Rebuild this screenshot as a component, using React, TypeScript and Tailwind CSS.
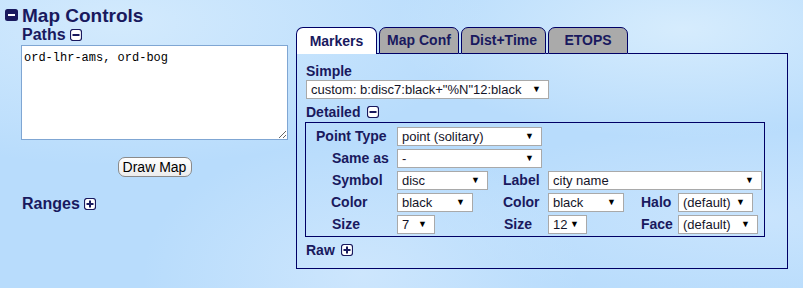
import type { ReactNode } from "react"

const NAVY = "#19195e"

function BoxIcon({ plus, filled }: { plus?: boolean; filled?: boolean }) {
  return (
    <svg width={filled ? 13 : 12} height="12" viewBox={filled ? "0 0 13 12" : "0 0 12 12"} className="shrink-0">
      {filled ? (
        <>
          <rect x="0" y="0" width="13" height="12" rx="2.5" fill={NAVY} />
          <rect x="3" y="5" width="7" height="2" fill="#ffffff" />
        </>
      ) : (
        <>
          <rect x="0.5" y="0.5" width="11" height="11" rx="2.5" fill="#ffffff" stroke={NAVY} strokeWidth="1.2" />
          <rect x="2.5" y="5" width="7" height="2" fill={NAVY} />
          {plus && <rect x="5" y="2.5" width="2" height="7" fill={NAVY} />}
        </>
      )}
    </svg>
  )
}

function Select({ value, w }: { value: string; w: number }) {
  return (
    <div
      className="h-[19px] flex items-center justify-between bg-white border border-[#a9a9a9] pl-[4px] pr-[7px] text-[13px] leading-none text-[#141428] font-normal shrink-0"
      style={{ width: w }}
    >
      <span className="whitespace-nowrap">{value}</span>
      <span className="text-[9px] text-black">▼</span>
    </div>
  )
}

function Row({ children }: { children: ReactNode }) {
  return <div className="h-[22px] flex items-center">{children}</div>
}

function Label({ text, w, pl = 0 }: { text: string; w: number; pl?: number }) {
  return (
    <div className="shrink-0 font-bold text-[14px] leading-none whitespace-nowrap" style={{ width: w, paddingLeft: pl }}>
      {text}
    </div>
  )
}

function Tab({ label, w, active }: { label: string; w: number; active?: boolean }) {
  return (
    <div
      className={`h-[27px] flex items-center justify-center rounded-t-[7px] border-x border-t border-[#000066] font-bold text-[14px] ${
        active ? "bg-white" : "bg-[#aaaaaa] border-b"
      }`}
      style={{ width: w }}
    >
      {label}
    </div>
  )
}

export default function App() {
  return (
    <div
      className="w-[803px] h-[288px] overflow-hidden flex bg-[#b8dcfc] bg-[radial-gradient(ellipse_at_15%_8%,#d3eafd_0%,transparent_38%),radial-gradient(ellipse_at_85%_10%,#d6ecfd_0%,transparent_30%),radial-gradient(ellipse_at_45%_95%,#cde6fd_0%,transparent_35%),radial-gradient(ellipse_at_95%_75%,#c9e4fd_0%,transparent_30%)] font-['Liberation_Sans',Arial,sans-serif]"
      style={{ color: NAVY }}
    >
      {/* left column */}
      <div className="w-[296px] shrink-0 pt-[4px]">
        <div className="flex items-center gap-[4px] pl-[5px] h-[22px]">
          <BoxIcon filled />
          <span className="font-bold text-[19px] leading-none">Map Controls</span>
        </div>
        <div className="flex items-center gap-[4px] pl-[22px] h-[18px]">
          <span className="font-bold text-[16px] leading-none">Paths</span>
          <BoxIcon />
        </div>
        <textarea
          spellCheck={false}
          defaultValue="ord-lhr-ams, ord-bog"
          className="block ml-[21px] mt-[1px] w-[267px] h-[95px] bg-white border border-[#7fa6d3] px-[2px] py-[4px] text-[12px] leading-[16px] text-black font-['Liberation_Mono','DejaVu_Sans_Mono',monospace] outline-none resize"
        />
        <div className="ml-[21px] w-[267px] flex justify-center mt-[17px]">
          <button className="h-[20px] w-[74px] rounded-[7px] border border-[#8a8a8a] bg-[linear-gradient(#ffffff,#ececec)] text-[14px] leading-none text-black">
            Draw Map
          </button>
        </div>
        <div className="flex items-center gap-[4px] pl-[22px] mt-[18px] h-[18px]">
          <span className="font-bold text-[16px] leading-none">Ranges</span>
          <BoxIcon plus />
        </div>
      </div>

      {/* right panel */}
      <div className="pt-[27px] w-[492px] shrink-0">
        <div className="flex items-end">
          <Tab label="Markers" w={81} active />
          <div className="w-[2px] border-b border-[#000066]" />
          <Tab label="Map Conf" w={80} />
          <div className="w-[2px] border-b border-[#000066]" />
          <Tab label="Dist+Time" w={85} />
          <div className="w-[2px] border-b border-[#000066]" />
          <Tab label="ETOPS" w={80} />
          <div className="flex-1 border-b border-[#000066]" />
        </div>
        <div className="h-[215px] border-x border-b border-[#000066] pl-[9px] pt-[9px]">
          <div className="font-bold text-[14px] leading-[16px]">Simple</div>
          <div className="mt-[1px]">
            <Select value={'custom: b:disc7:black+"%N"12:black'} w={243} />
          </div>
          <div className="flex items-center gap-[7px] mt-[5px] h-[16px]">
            <span className="font-bold text-[14px] leading-none">Detailed</span>
            <BoxIcon />
          </div>
          <div className="mt-[2px] -ml-px w-[460px] border border-[#000066] pt-[2px] pb-[1px]">
            <Row>
              <Label text="Point Type" w={91} pl={10} />
              <Select value="point (solitary)" w={145} />
            </Row>
            <Row>
              <Label text="Same as" w={91} pl={26} />
              <Select value="-" w={145} />
            </Row>
            <Row>
              <Label text="Symbol" w={91} pl={26} />
              <div className="w-[106px] shrink-0">
                <Select value="disc" w={91} />
              </div>
              <Label text="Label" w={45} />
              <Select value="city name" w={214} />
            </Row>
            <Row>
              <Label text="Color" w={91} pl={25} />
              <div className="w-[106px] shrink-0">
                <Select value="black" w={76} />
              </div>
              <Label text="Color" w={45} />
              <div className="w-[93px] shrink-0">
                <Select value="black" w={76} />
              </div>
              <Label text="Halo" w={37} />
              <Select value="(default)" w={75} />
            </Row>
            <Row>
              <Label text="Size" w={91} pl={26} />
              <div className="w-[106px] shrink-0">
                <Select value="7" w={38} />
              </div>
              <Label text="Size" w={45} pl={1} />
              <div className="w-[93px] shrink-0">
                <Select value="12" w={39} />
              </div>
              <Label text="Face" w={37} />
              <Select value="(default)" w={80} />
            </Row>
          </div>
          <div className="flex items-center gap-[6px] mt-[5px] h-[16px]">
            <span className="font-bold text-[14px] leading-none">Raw</span>
            <BoxIcon plus />
          </div>
        </div>
      </div>
    </div>
  )
}
